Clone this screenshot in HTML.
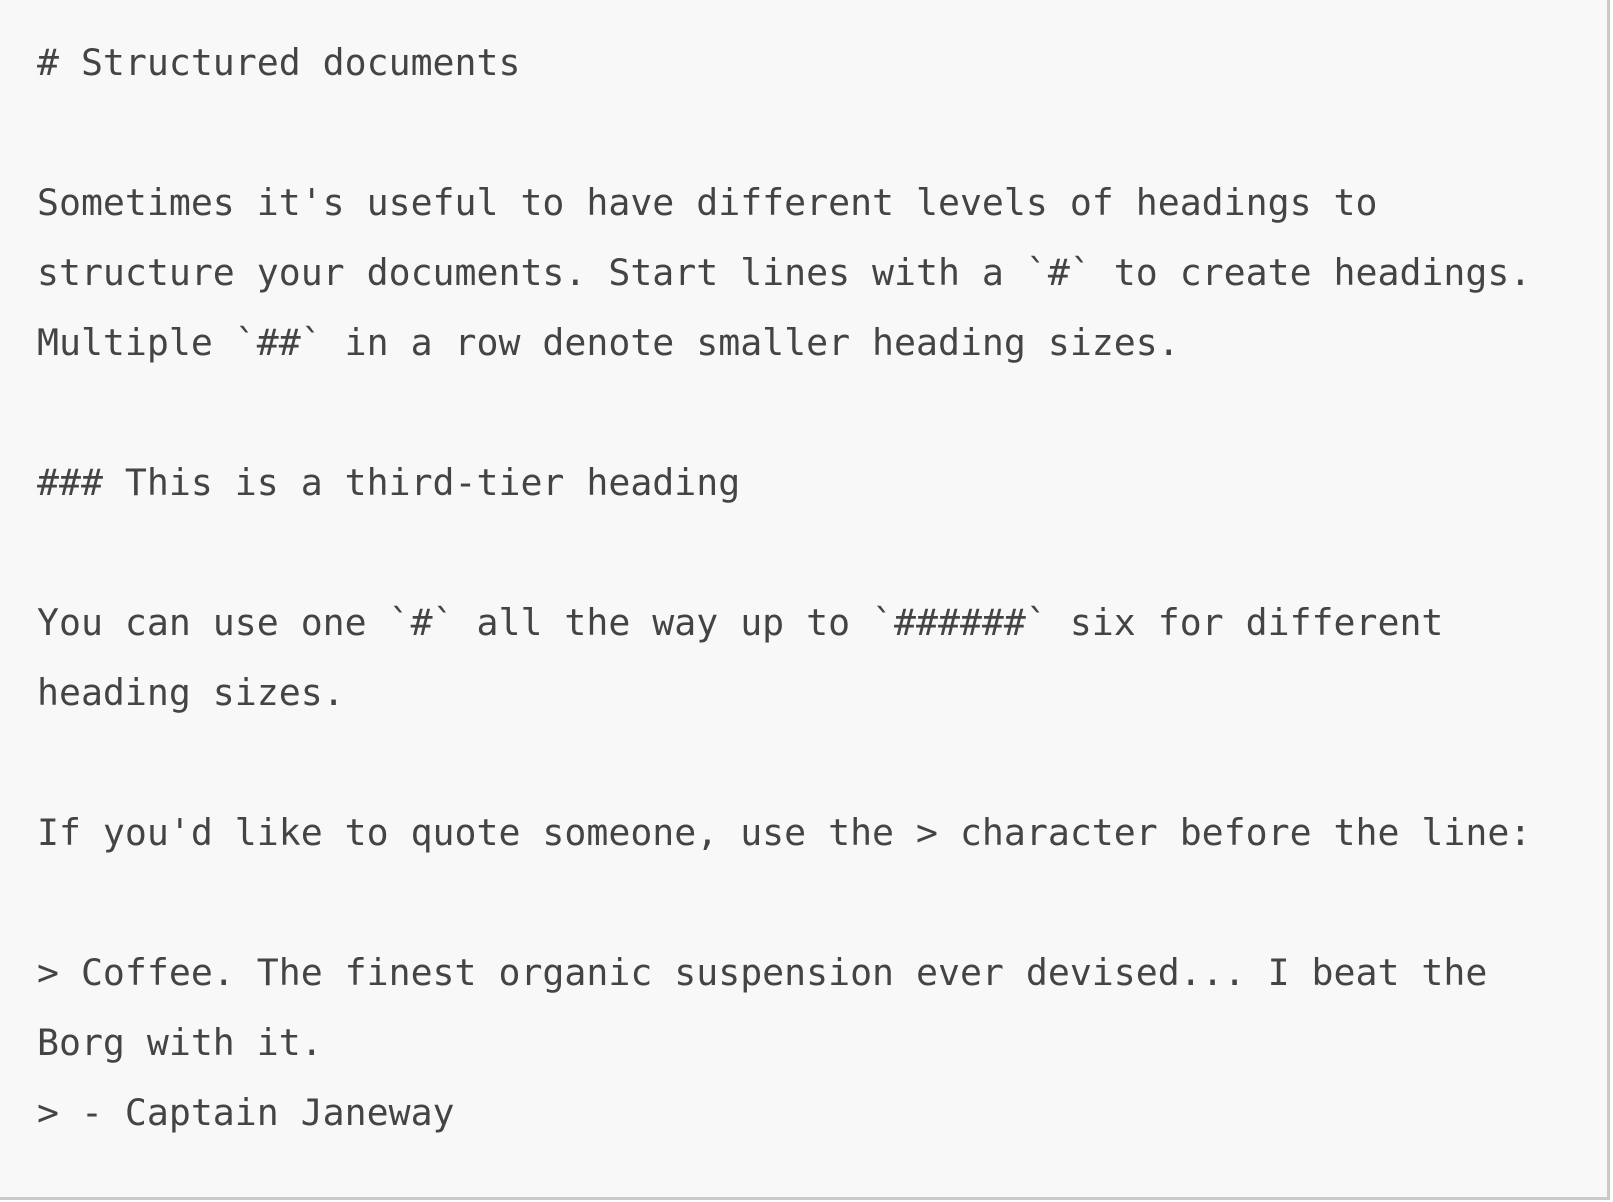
<!DOCTYPE html>
<html><head><meta charset="utf-8"><style>
html,body{margin:0;padding:0;background:#fff;}
.box{position:absolute;left:0;top:0;width:1607px;height:1197px;background:#f8f8f8;border-right:3px solid #cacaca;border-bottom:3px solid #cacaca;box-sizing:content-box;}
pre{margin:0;padding:28px 0 0 37px;font-family:"DejaVu Sans Mono","Liberation Mono",monospace;font-size:36.5px;line-height:70px;color:#444;white-space:pre;}
</style></head><body><div class="box"><pre># Structured documents

Sometimes it's useful to have different levels of headings to
structure your documents. Start lines with a `#` to create headings.
Multiple `##` in a row denote smaller heading sizes.

### This is a third-tier heading

You can use one `#` all the way up to `######` six for different
heading sizes.

If you'd like to quote someone, use the &gt; character before the line:

&gt; Coffee. The finest organic suspension ever devised... I beat the
Borg with it.
&gt; - Captain Janeway</pre></div></body></html>
